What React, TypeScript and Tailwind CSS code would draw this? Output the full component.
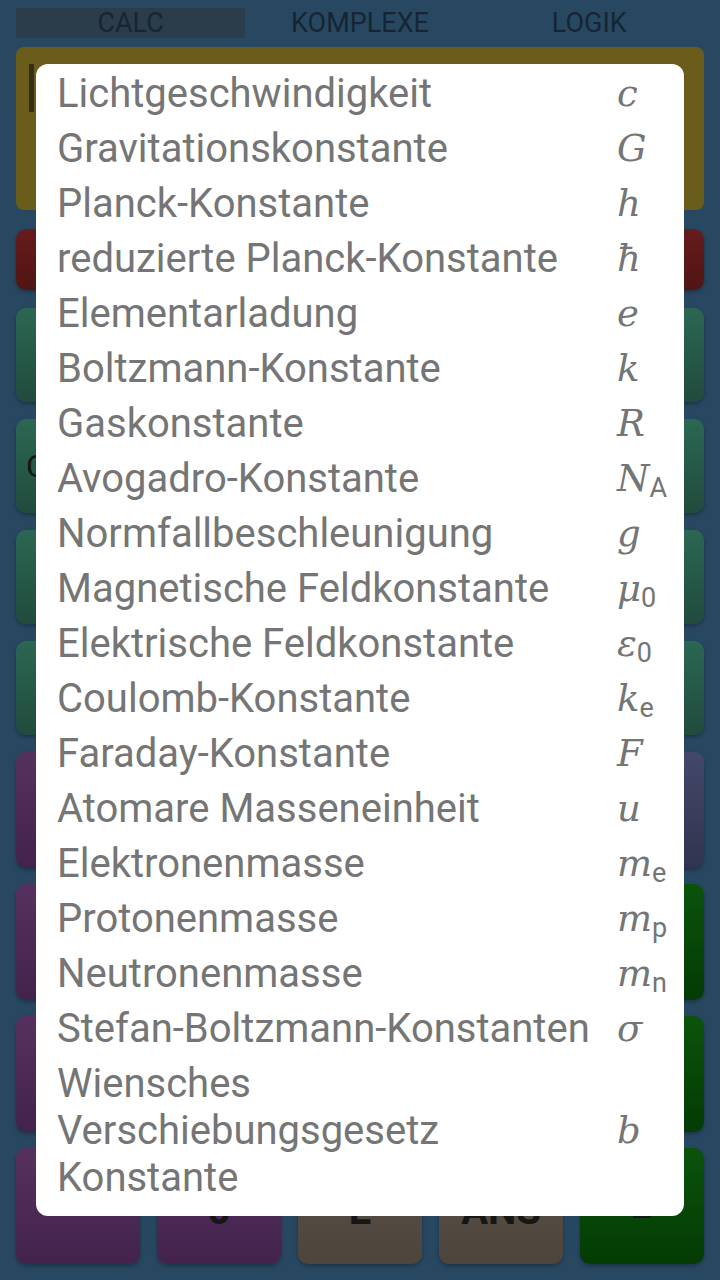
import type { ReactNode } from "react"

type Constant = { name: string; sym: string; sub?: string }

const constants: Constant[] = [
  { name: "Lichtgeschwindigkeit", sym: "c" },
  { name: "Gravitationskonstante", sym: "G" },
  { name: "Planck-Konstante", sym: "h" },
  { name: "reduzierte Planck-Konstante", sym: "ħ" },
  { name: "Elementarladung", sym: "e" },
  { name: "Boltzmann-Konstante", sym: "k" },
  { name: "Gaskonstante", sym: "R" },
  { name: "Avogadro-Konstante", sym: "N", sub: "A" },
  { name: "Normfallbeschleunigung", sym: "g" },
  { name: "Magnetische Feldkonstante", sym: "μ", sub: "0" },
  { name: "Elektrische Feldkonstante", sym: "ε", sub: "0" },
  { name: "Coulomb-Konstante", sym: "k", sub: "e" },
  { name: "Faraday-Konstante", sym: "F" },
  { name: "Atomare Masseneinheit", sym: "u" },
  { name: "Elektronenmasse", sym: "m", sub: "e" },
  { name: "Protonenmasse", sym: "m", sub: "p" },
  { name: "Neutronenmasse", sym: "m", sub: "n" },
  { name: "Stefan-Boltzmann-Konstanten", sym: "σ" },
  { name: "Wiensches Verschiebungsgesetz Konstante", sym: "b" },
]

const red = "bg-gradient-to-b from-[#661c1c] to-[#511414]"
const green = "bg-gradient-to-b from-[#2b6753] to-[#214b3d]"
const purple = "bg-gradient-to-b from-[#56315f] to-[#42234c]"
const brown = "bg-gradient-to-b from-[#5b524a] to-[#4d443c]"
const slate = "bg-gradient-to-b from-[#444869] to-[#313350]"
const dgreen = "bg-gradient-to-b from-[#0b530b] to-[#053b05]"

const funcRows: { c: string; t: string }[][] = [
  [
    { c: green, t: "SIN" },
    { c: green, t: "COS" },
    { c: green, t: "TAN" },
    { c: green, t: "LN" },
    { c: green, t: "LOG" },
  ],
  [
    { c: green, t: "CONST" },
    { c: green, t: "√" },
    { c: green, t: "x²" },
    { c: green, t: "xʸ" },
    { c: green, t: "!" },
  ],
  [
    { c: green, t: "DEG" },
    { c: green, t: "π" },
    { c: green, t: "e" },
    { c: green, t: "(" },
    { c: green, t: ")" },
  ],
  [
    { c: green, t: "%" },
    { c: green, t: "1/x" },
    { c: green, t: "EXP" },
    { c: green, t: "MOD" },
    { c: green, t: "nCr" },
  ],
]

const padRows: { c: string; t: string }[][] = [
  [
    { c: purple, t: "7" },
    { c: purple, t: "8" },
    { c: purple, t: "9" },
    { c: brown, t: "÷" },
    { c: slate, t: "DEL" },
  ],
  [
    { c: purple, t: "4" },
    { c: purple, t: "5" },
    { c: purple, t: "6" },
    { c: brown, t: "×" },
    { c: dgreen, t: "AC" },
  ],
  [
    { c: purple, t: "1" },
    { c: purple, t: "2" },
    { c: purple, t: "3" },
    { c: brown, t: "−" },
    { c: dgreen, t: "+" },
  ],
  [
    { c: purple, t: "" },
    { c: purple, t: "0" },
    { c: brown, t: "E" },
    { c: brown, t: "ANS" },
    { c: dgreen, t: "=" },
  ],
]

function Key({ className, children }: { className: string; children?: ReactNode }) {
  return (
    <div
      className={`flex items-center justify-center rounded-[10px] font-bold text-[#161616] shadow-[0_2px_4px_rgba(0,0,0,0.3)] ${className}`}
    >
      {children}
    </div>
  )
}

export default function App() {
  return (
    <div
      className="relative h-[1280px] w-[720px] overflow-hidden bg-[#284862]"
      style={{ fontFamily: "Roboto, 'Noto Sans', sans-serif" }}
    >
      <div className="flex flex-col px-4">
        {/* tabs */}
        <div className="mt-2 grid h-[30px] grid-cols-3 text-[27px] leading-[30px] text-[#172533]">
          <div className="bg-[#2b3c4b] text-center">CALC</div>
          <div className="text-center">KOMPLEXE</div>
          <div className="text-center">LOGIK</div>
        </div>

        {/* display */}
        <div className="mt-[9px] h-[163px] rounded-[8px] bg-[#6a5d1b] pl-[13px] pt-[17px]">
          <div className="h-[48px] w-[5px] bg-[#33301a]" />
        </div>

        {/* top function row */}
        <div className="mt-[19px] grid h-[61px] grid-cols-5 gap-x-[17px]">
          <Key className={red} />
          <Key className={red} />
          <Key className={red} />
          <Key className={red} />
          <Key className={red} />
        </div>

        <div className="mt-[18px] flex flex-col gap-[17px]">
          {funcRows.map((row, i) => (
            <div key={i} className="grid h-[94px] grid-cols-5 gap-x-[17px]">
              {row.map((k, j) => (
                <Key key={j} className={`${k.c} text-[32px] font-normal`}>
                  {k.t}
                </Key>
              ))}
            </div>
          ))}
        </div>

        <div className="mt-[17px] flex flex-col gap-[16px]">
          {padRows.map((row, i) => (
            <div key={i} className="grid h-[116px] grid-cols-5 gap-x-[17px]">
              {row.map((k, j) => (
                <Key key={j} className={`${k.c} text-[40px]`}>
                  <span className="mt-[10px]">{k.t}</span>
                </Key>
              ))}
            </div>
          ))}
        </div>
      </div>

      {/* constants dialog */}
      <div className="absolute left-[36px] top-[64px] h-[1152px] w-[648px] rounded-[12px] bg-white pb-[11px] pl-[21px] pr-[20px] pt-[2px]">
        {constants.map((c) => (
          <div key={c.name} className="flex items-center py-[4px]">
            <div className="flex-1 text-[40px] leading-[47px] text-[#757575]">{c.name}</div>
            <div className="w-[47px] shrink-0 whitespace-nowrap text-[#757575]">
              <span
                className="text-[37px] italic leading-[47px]"
                style={{ fontFamily: "'DejaVu Serif', serif" }}
              >
                {c.sym}
              </span>
              {c.sub && (
                <span className="relative top-[6px] text-[27px] leading-none">{c.sub}</span>
              )}
            </div>
          </div>
        ))}
      </div>
    </div>
  )
}
